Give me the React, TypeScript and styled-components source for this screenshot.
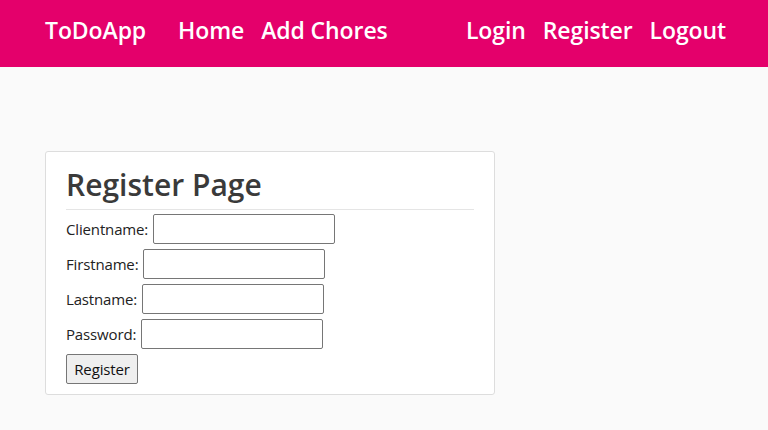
import React from "react";
import styled, { createGlobalStyle } from "styled-components";

const Global = createGlobalStyle`
  html, body { margin: 0; padding: 0; }
  body {
    background: #fafafa;
    font-family: "Open Sans", "Noto Sans", sans-serif;
  }
`;

const NavBar = styled.nav`
  height: 67px;
  background: #e4006b;
  display: flex;
  align-items: center;
  padding: 0 42px 8px 45px;
  box-sizing: border-box;
`;

const NavGroup = styled.div<{ $lead?: number }>`
  display: flex;
  align-items: center;
  gap: 17px;
  margin-left: ${(p) => p.$lead ?? 0}px;
`;

const NavLink = styled.a`
  color: #ffffff;
  font-size: 23px;
  font-weight: 600;
  letter-spacing: -0.1px;
  text-decoration: none;
  line-height: 30px;
  cursor: pointer;
`;

const Spacer = styled.div`
  flex: 1;
`;

const Main = styled.main`
  padding: 84px 0 0 45px;
`;

const Card = styled.section`
  width: 450px;
  box-sizing: border-box;
  background: #ffffff;
  border: 1px solid #dddddd;
  border-radius: 3px;
  padding: 0 20px 10px 20px;
`;

const Title = styled.h2`
  margin: 0;
  padding: 11px 0 0 0;
  font-size: 30px;
  font-weight: 600;
  line-height: 44px;
  color: #3a3a3a;
  letter-spacing: 0;
  border-bottom: 1px solid #e5e5e5;
  height: 58px;
  box-sizing: border-box;
`;

const Form = styled.form`
  display: flex;
  flex-direction: column;
  align-items: flex-start;
  gap: 5px;
  padding-top: 4px;
`;

const Row = styled.div`
  display: flex;
  align-items: center;
  gap: 5px;
`;

const Label = styled.label`
  font-size: 15px;
  color: #222222;
  letter-spacing: -0.15px;
`;

const Input = styled.input`
  width: 182px;
  height: 30px;
  box-sizing: border-box;
  border: 1px solid #767676;
  border-radius: 2px;
  background: #ffffff;
  padding: 1px 4px;
  font-family: inherit;
  font-size: 14px;
  margin: 0;
`;

const Button = styled.button`
  width: 72px;
  height: 30px;
  box-sizing: border-box;
  background: #efefef;
  border: 1px solid #767676;
  border-radius: 2px;
  font-family: "Open Sans", "Noto Sans", sans-serif;
  font-size: 15px;
  color: #111111;
  letter-spacing: -0.15px;
  padding: 0;
  margin: 0;
`;

const fields = [
  { id: "clientname", label: "Clientname:", type: "text" },
  { id: "firstname", label: "Firstname:", type: "text" },
  { id: "lastname", label: "Lastname:", type: "text" },
  { id: "password", label: "Password:", type: "password" },
];

export default function App() {
  return (
    <>
      <Global />
      <NavBar>
        <NavLink>ToDoApp</NavLink>
        <NavGroup $lead={32}>
          <NavLink>Home</NavLink>
          <NavLink>Add Chores</NavLink>
        </NavGroup>
        <Spacer />
        <NavGroup>
          <NavLink>Login</NavLink>
          <NavLink>Register</NavLink>
          <NavLink>Logout</NavLink>
        </NavGroup>
      </NavBar>
      <Main>
        <Card>
          <Title>Register Page</Title>
          <Form onSubmit={(e) => e.preventDefault()}>
            {fields.map((f) => (
              <Row key={f.id}>
                <Label htmlFor={f.id}>{f.label}</Label>
                <Input id={f.id} type={f.type} />
              </Row>
            ))}
            <Button type="submit">Register</Button>
          </Form>
        </Card>
      </Main>
    </>
  );
}
